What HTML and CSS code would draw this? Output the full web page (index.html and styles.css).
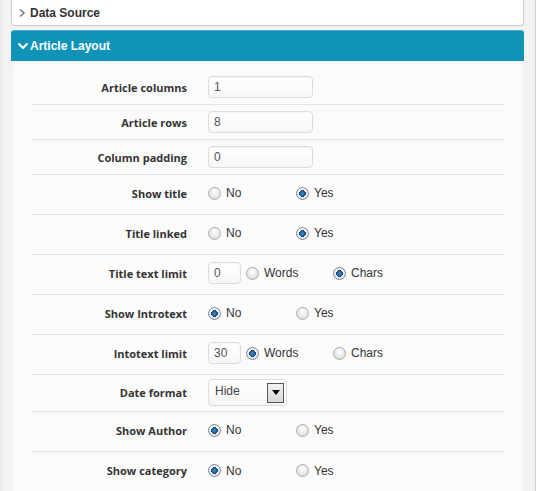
FILE: index.html
```html
<!DOCTYPE html>
<html>
<head>
<meta charset="utf-8">
<link rel="stylesheet" href="styles.css">
</head>
<body>
<div class="frame">
  <div class="panel">
    <div class="acc-head closed">
      <svg class="ico" width="8" height="10" viewBox="0 0 8 10"><polyline points="2,1.5 6,5 2,8.5" fill="none" stroke="#7a7a7a" stroke-width="1.6"/></svg>
      <span>Data Source</span>
    </div>
    <div class="acc-head open">
      <svg class="ico" width="12" height="10" viewBox="0 0 12 10"><polyline points="1.5,2.5 6,7 10.5,2.5" fill="none" stroke="#fff" stroke-width="2.2"/></svg>
      <span>Article Layout</span>
    </div>
    <div class="acc-body">
      <div class="row r-text"><label class="lbl">Article columns</label><input class="txt" type="text" value="1"></div>
      <div class="row r-text"><label class="lbl">Article rows</label><input class="txt" type="text" value="8"></div>
      <div class="row r-text"><label class="lbl">Column padding</label><input class="txt" type="text" value="0"></div>
      <div class="row r-radio"><label class="lbl">Show title</label>
        <label class="opt"><input type="radio" name="st"><span>No</span></label>
        <label class="opt"><input type="radio" name="st" checked><span>Yes</span></label>
      </div>
      <div class="row r-radio"><label class="lbl">Title linked</label>
        <label class="opt"><input type="radio" name="tl"><span>No</span></label>
        <label class="opt"><input type="radio" name="tl" checked><span>Yes</span></label>
      </div>
      <div class="row r-radio"><label class="lbl">Title text limit</label>
        <input class="txt small" type="text" value="0">
        <label class="opt narrow"><input type="radio" name="ttl"><span>Words</span></label>
        <label class="opt narrow"><input type="radio" name="ttl" checked><span>Chars</span></label>
      </div>
      <div class="row r-radio"><label class="lbl">Show Introtext</label>
        <label class="opt"><input type="radio" name="si" checked><span>No</span></label>
        <label class="opt"><input type="radio" name="si"><span>Yes</span></label>
      </div>
      <div class="row r-radio"><label class="lbl">Intotext limit</label>
        <input class="txt small" type="text" value="30">
        <label class="opt narrow"><input type="radio" name="il" checked><span>Words</span></label>
        <label class="opt narrow"><input type="radio" name="il"><span>Chars</span></label>
      </div>
      <div class="row r-select"><label class="lbl">Date format</label>
        <div class="select"><span>Hide</span><span class="sel-btn"><svg width="8" height="5" viewBox="0 0 8 5"><polygon points="0,0 8,0 4,5" fill="#000"/></svg></span></div>
      </div>
      <div class="row r-radio"><label class="lbl">Show Author</label>
        <label class="opt"><input type="radio" name="sa" checked><span>No</span></label>
        <label class="opt"><input type="radio" name="sa"><span>Yes</span></label>
      </div>
      <div class="row r-radio last"><label class="lbl">Show category</label>
        <label class="opt"><input type="radio" name="sc" checked><span>No</span></label>
        <label class="opt"><input type="radio" name="sc"><span>Yes</span></label>
      </div>
    </div>
  </div>
</div>
</body>
</html>
```

FILE: styles.css
```css
* { box-sizing: border-box; }
html, body { margin: 0; padding: 0; background: #fff; }
body { font-family: "Liberation Sans", Arial, sans-serif; color: #333; }

.frame {
  width: 536px;
  height: 491px;
  overflow: hidden;
  padding: 0 11px;
  background: linear-gradient(to right, #e9e9e9 0, #f3f3f3 4px, #f3f3f3 100%);
  border-right: 1px solid #cfcfcf;
}

.panel { width: 513px; }

.acc-head {
  display: flex;
  align-items: center;
  font-weight: bold;
  font-size: 12px;
}
.acc-head .ico { flex: none; }
.acc-head.closed {
  height: 26px;
  padding: 0 0 0 6px;
  background: #fff;
  border: 1px solid #cdcdcd;
  border-top: none;
  border-radius: 0 0 3px 3px;
  color: #333;
}
.acc-head.closed .ico { margin-right: 4px; }
.acc-head.open {
  margin-top: 4px;
  height: 31px;
  padding: 0 0 0 6px;
  background: #0f94b7;
  border-top: 1px solid #4fb0cc;
  border-radius: 3px 3px 0 0;
  color: #fff;
  font-size: 12px;
}
.acc-head.open .ico { margin-right: 1px; }

.acc-body {
  margin: 0 2px;
  height: 440px;
  padding: 5px 18px 0 19px;
  background: #fbfbfb;
  border-top: 4px solid #f7f7f7;
}

.row {
  display: flex;
  align-items: center;
  border-bottom: 1px solid #e4e4e4;
}
.row.last { border-bottom: none; }
.r-text { height: 35px; }
.r-radio { height: 40px; padding-bottom: 3px; }
.r-select { height: 37px; padding-bottom: 1px; }

.lbl {
  flex: none;
  width: 155px;
  margin-right: 21px;
  text-align: right;
  font-family: "Open Sans", "Liberation Sans", sans-serif;
  font-weight: bold;
  font-size: 11px;
  color: #333;
}

.txt {
  width: 105px;
  height: 22px;
  margin: 0;
  padding: 0 5px;
  border: 1px solid #dcdcdc;
  border-radius: 4px;
  background: linear-gradient(#ffffff, #f7f7f7);
  box-shadow: inset 0 1px 1px rgba(0,0,0,0.04);
  font-family: "Liberation Sans", Arial, sans-serif;
  font-size: 12px;
  color: #555;
  outline: none;
}
.txt.small { width: 33px; margin-right: 5px; }

.opt {
  display: flex;
  align-items: center;
  width: 88px;
  font-size: 12px;
  color: #333;
}
.opt.narrow { width: 87px; }
.opt span { margin-left: 5px; }

.opt input {
  -webkit-appearance: none;
  appearance: none;
  width: 13px;
  height: 13px;
  margin: 0;
  border-radius: 50%;
  border: 1px solid #a9a9a9;
  background: radial-gradient(circle at 50% 35%, #fdfdfd 0, #e9e9e9 55%, #cfcfcf 100%);
  flex: none;
}
.opt input:checked {
  border-color: #7b8690;
  background:
    radial-gradient(circle at 50% 50%, #3a8fd0 0, #1c5f9a 2.6px, #123f66 3.2px, rgba(0,0,0,0) 3.6px),
    radial-gradient(circle at 50% 35%, #ffffff 0, #eaeaea 60%, #cfcfcf 100%);
}

.select {
  display: flex;
  align-items: center;
  justify-content: space-between;
  width: 79px;
  height: 27px;
  padding: 0 2px 0 6px;
  border: 1px solid #dcdcdc;
  border-radius: 4px;
  background: linear-gradient(#ffffff, #f6f6f6);
  font-size: 12px;
  color: #444;
}
.select span:first-child { margin-top: -3px; }
.sel-btn {
  display: flex;
  align-items: center;
  justify-content: center;
  width: 17px;
  height: 20px;
  border: 1px solid #555;
  background: linear-gradient(#f2f2f2, #d8d8d8);
}
```
